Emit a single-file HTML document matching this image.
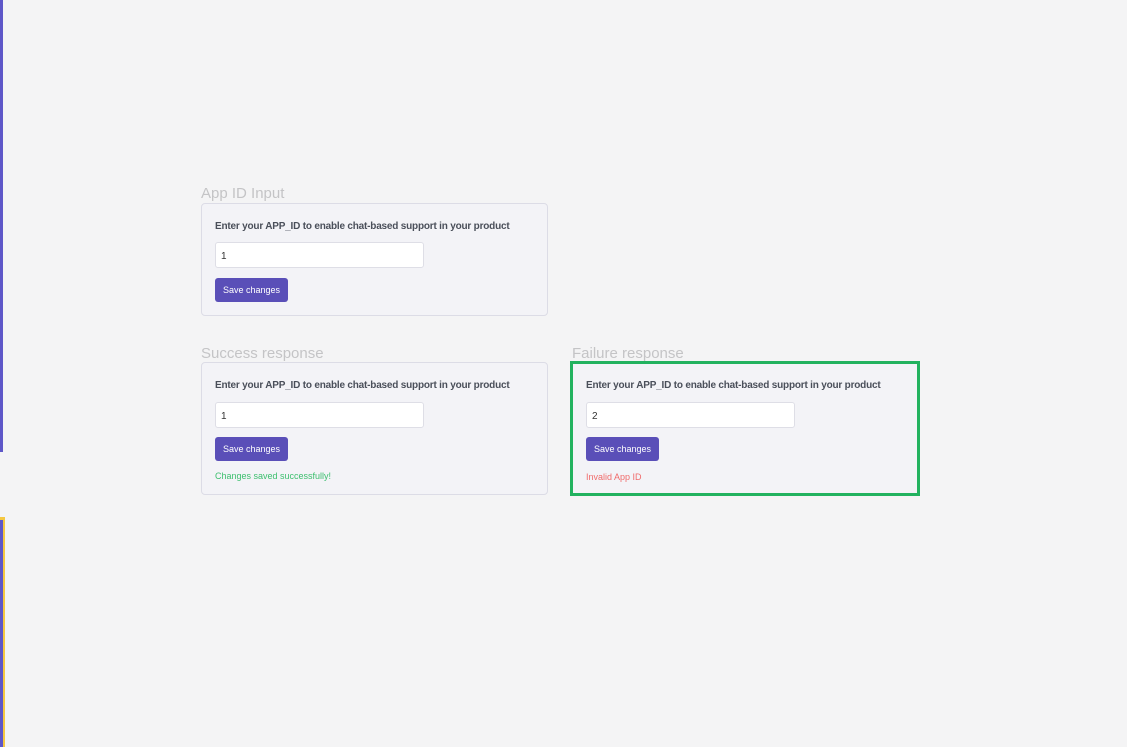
<!DOCTYPE html>
<html><head><style>
body{margin:0;width:1127px;height:747px;background:#f4f4f5;font-family:"Liberation Sans",sans-serif;position:relative;overflow:hidden}
.bar1{position:absolute;left:0;top:0;width:3px;height:452px;background:#5e57c8}
.bar2{position:absolute;left:0;top:517px;width:5px;height:230px;background:#f5c842}
.bar2 i{position:absolute;left:0;top:3px;width:3px;bottom:0;background:#5e57c8}
.t{position:absolute;font-size:15px;color:#c4c4c6}
.card{position:absolute;width:347px;background:#f3f3f7;border:1px solid #dcdce6;border-radius:4px;box-sizing:border-box}
.card.g{border:3px solid #22b25f;border-radius:0}
.lbl{position:absolute;left:13px;font-size:10px;font-weight:bold;color:#4a4f5a;letter-spacing:-0.2px}
.in{position:absolute;left:13px;width:209px;height:26px;background:#fff;border:1px solid #dedee6;border-radius:3px;box-sizing:border-box;font-size:10px;color:#333;padding:8px 5px}
.btn{position:absolute;left:13px;width:73px;height:24px;background:#5a4fb8;border-radius:3px;color:#fff;font-size:9px;text-align:center;line-height:24px}
.msg{position:absolute;left:13px;font-size:9px}
</style></head><body>
<div class="bar1"></div><div class="bar2"><i></i></div>
<div class="t" style="left:201px;top:185px">App ID Input</div>
<div class="card" style="left:201px;top:203px;height:113px">
<div class="lbl" style="top:17px">Enter your APP_ID to enable chat-based support in your product</div>
<div class="in" style="top:38px">1</div>
<div class="btn" style="top:74px">Save changes</div>
</div>
<div class="t" style="left:201px;top:345px">Success response</div>
<div class="card" style="left:201px;top:362px;height:133px">
<div class="lbl" style="top:17px">Enter your APP_ID to enable chat-based support in your product</div>
<div class="in" style="top:39px">1</div>
<div class="btn" style="top:74px">Save changes</div>
<div class="msg" style="top:108px;color:#3cbf6e">Changes saved successfully!</div>
</div>
<div class="t" style="left:572px;top:345px">Failure response</div>
<div class="card g" style="left:570px;top:361px;width:350px;height:135px">
<div class="lbl" style="top:16px;left:13px">Enter your APP_ID to enable chat-based support in your product</div>
<div class="in" style="top:38px">2</div>
<div class="btn" style="top:73px">Save changes</div>
<div class="msg" style="top:108px;color:#f06b6b">Invalid App ID</div>
</div>
</body></html>
